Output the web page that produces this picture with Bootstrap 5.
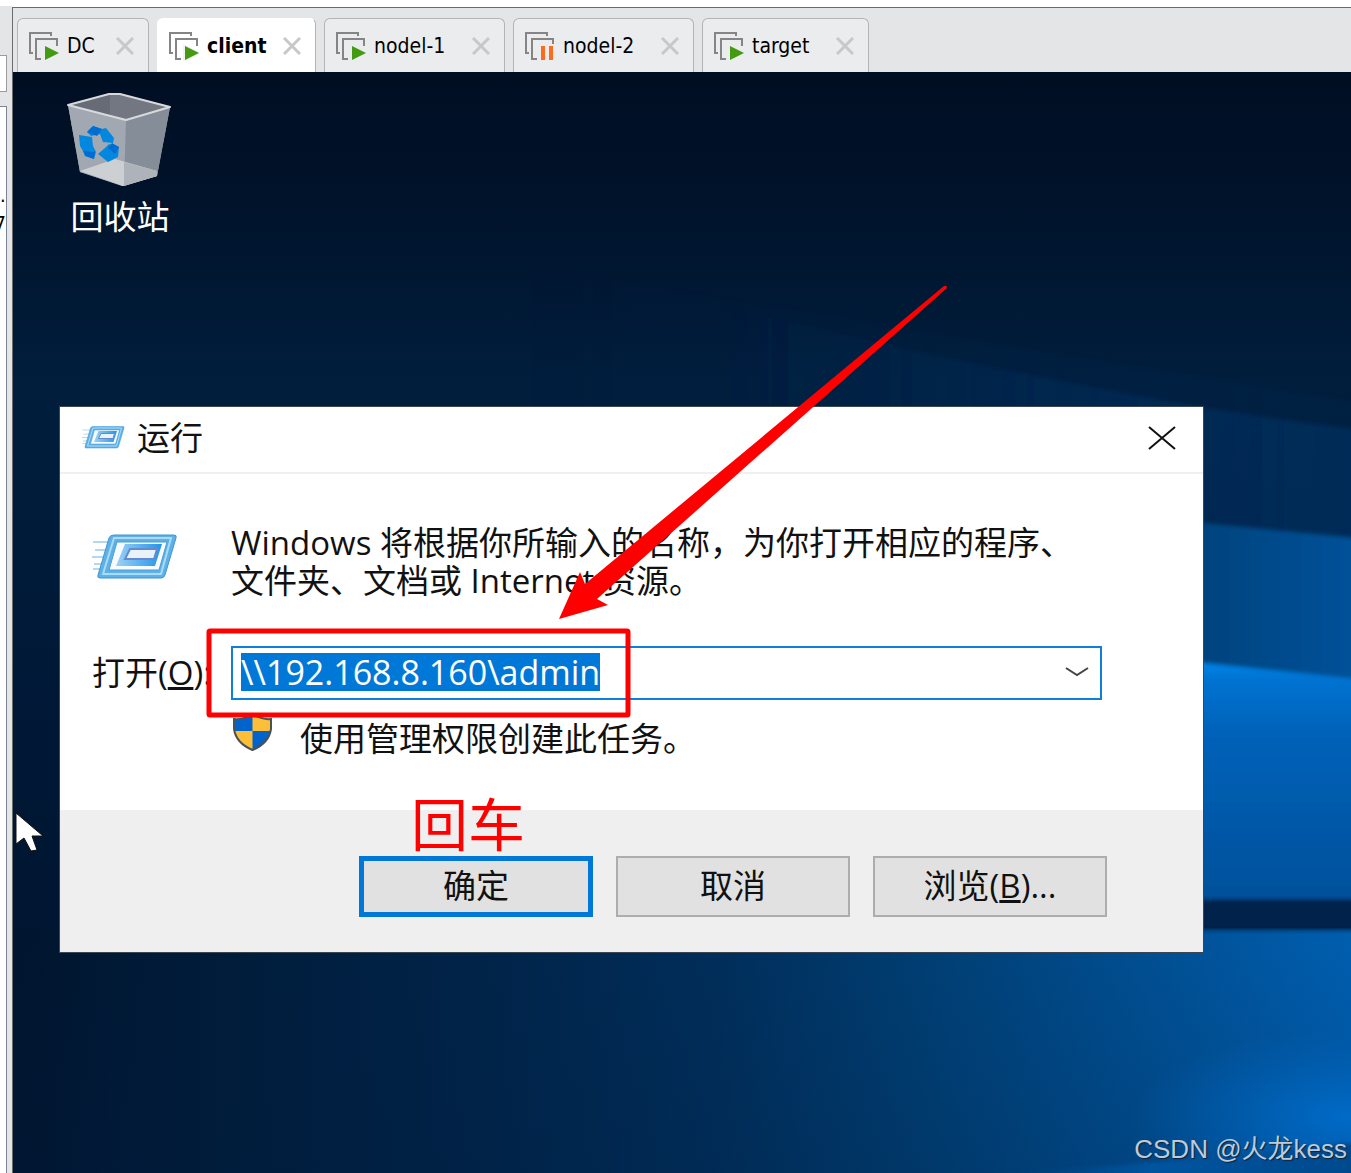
<!DOCTYPE html>
<html lang="zh-CN">
<head>
<meta charset="utf-8">
<meta name="viewport" content="width=device-width, initial-scale=1">
<title>client</title>
<link href="https://cdn.jsdelivr.net/npm/bootstrap@5.3.0/dist/css/bootstrap.min.css" rel="stylesheet">
<style>
  body { font-family: "Open Sans", "Noto Sans CJK SC", sans-serif; font-size: 33px; line-height: 38px; color: #111; background: #fff; padding-top: 6px; }
  .side { width: 12px; background: #e4e5e7; font: 20px/28px "DejaVu Sans Condensed", sans-serif; padding-top: 49px; }
  .side-search { width: 7px; height: 37px; background: #fff; border: 2px solid #9a9b9e; border-width: 1px 1px 1px 0; }
  .side-tree { width: 7px; margin-top: 14px; background: #fff; border: 1px solid #7f8494; border-width: 1px 1px 0 0; padding-top: 74px; color: #000; }
  .main-pane { border: 1px solid #6a6b6d; border-width: 1px 0 0 1px; margin-top: 1px; }
  .tabs { background: #e4e5e7; padding: 10px 4px 0; gap: 8px; font: 21px/28px "DejaVu Sans Condensed", "Noto Sans", sans-serif; }
  .vm-tab { height: 54px; padding: 0 14px 0 11px; background: #ebecee; border: 1px solid #b3b4b6; border-bottom: 0; border-radius: 6px 6px 0 0; color: #000; }
  .vm-tab.current { background: #fff; border-color: #fff #b3b4b6 #fff #fff; font-weight: 700; }
  .vm-tab a { color: #000; text-decoration: none; gap: 8px; }
  .w-a { width: 132px; } .w-b { width: 159px; } .w-c { width: 181px; } .w-d { width: 167px; }
  .plain { background: none; border: 0; padding: 0; line-height: 0; }
  .desktop { background: #00132b; }
  .wallpaper, .notes { inset: 0; width: 100%; height: 100%; }
  .notes { pointer-events: none; }
  .bin { left: 47px; top: 19px; color: #fff; text-decoration: none; width: 120px; }
  .bin svg { margin-bottom: 9px; }
  .run { left: 46px; right: 147px; top: 334px; background: #fff; border: 1px solid #3b4652; }
  .run-head { height: 67px; padding: 0 26px 3px 22px; border-bottom: 2px solid #f0f0f0; gap: 12px; }
  .run-body { padding: 50px 101px 52px 32px; }
  .lead-col { width: 139px; flex: none; white-space: nowrap; }
  .combo { height: 54px; border: 2px solid #0f7fdc; background: #fff; padding: 5px 10px 7px 8px; }
  .combo input { border: 0; outline: 0; padding: 0; height: 38px; font-size: 34px; line-height: 38px; min-width: 0; }
  .combo input::selection { background: #0078d7; color: #fff; }
  .open-row { margin-top: 46px; }
  .admin-row { margin-top: 20px; padding-left: 141px; gap: 28px; }
  .run-foot { background: #efefef; padding: 46px 96px 35px; gap: 23px; }
  .run-btn { width: 234px; height: 61px; background: #e1e1e1; border: 2px solid #adadad; padding: 0 0 2px; color: #111; }
  .run-btn.primary { border: 5px solid #0078d7; }
  .enter-note { left: 398px; top: 722px; font-size: 57px; line-height: 60px; color: #f00; pointer-events: none; }
  .pointer { left: 1px; top: 739px; }
  .watermark { right: 4px; bottom: 5px; font: 26px/38px "Liberation Sans", "Noto Sans CJK SC", sans-serif; color: #bccbdc; text-shadow: 1px 1px 1px #123; }
</style>
</head>
<body class="vh-100 d-flex flex-column overflow-hidden">
<svg width="0" height="0" class="position-absolute">
  <symbol id="vm" viewBox="0 0 30 30"><path d="M4 22H1V2h21v3M12 28H7V8h21v7" fill="none" stroke="#858585" stroke-width="2"/></symbol>
  <symbol id="play" viewBox="0 0 30 30"><use href="#vm"/><path d="M14 13v18l18-9z" fill="#ebecee" opacity=".7"/><path d="M16 15v14l14-7z" fill="#449a10"/></symbol>
  <symbol id="pause" viewBox="0 0 30 30"><use href="#vm"/><path d="M14 13h16v17H14z" fill="#ebecee"/><path d="M16 15h4v14h-4zM24 15h4v14h-4z" fill="#ff6a1c"/></symbol>
  <symbol id="cross" viewBox="0 0 18 18"><path d="M1 1l16 16M17 1L1 17" stroke="#c8c8c8" stroke-width="3"/></symbol>
  <symbol id="runicon" viewBox="0 0 86 54">
    <path d="M1 10h22M3 18h18M0 25h18M2 32h14M1 37h14" stroke="#b5d8f1" stroke-width="2"/>
    <path d="M22 3h60q3 0 2 3L73 43q-1 3-4 3H8q-3 0-2-3L17 6q1-3 5-3z" fill="#5eb0e6" stroke="#3d96d2"/>
    <path d="M22 6h57L69 42H11z" fill="none" stroke="#a9dcf6" stroke-width="2"/>
    <path d="M25 10h50l-8 28H17z" fill="#f7fbfe" stroke="#4b9ed6"/>
    <path d="M33 12h37l-7 22H24z" fill="url(#ri)"/>
    <path d="M38 17h27l-3 10H33z" fill="#e8f3fc" stroke="#6689cf" stroke-width="2"/>
  </symbol>
  <linearGradient id="ri"><stop stop-color="#9bd2f5"/><stop offset="1" stop-color="#2494e6"/></linearGradient>
</svg>
<div class="d-flex flex-grow-1">
  <aside class="side d-flex flex-column flex-shrink-0">
    <div class="side-search"></div>
    <div class="side-tree flex-grow-1 overflow-hidden"><div class="text-nowrap">.8</div><div class="d-flex justify-content-end">7</div></div>
  </aside>
  <main class="main-pane d-flex flex-column flex-grow-1">
    <nav class="tabs d-flex">
      <div class="vm-tab w-a d-flex align-items-center"><a href="#" class="d-flex align-items-center"><svg width="30" height="30"><use href="#play"/></svg>DC</a><button class="plain ms-auto" aria-label="关闭"><svg width="18" height="18"><use href="#cross"/></svg></button></div>
      <div class="vm-tab w-b current d-flex align-items-center"><a href="#" class="d-flex align-items-center"><svg width="30" height="30"><use href="#play"/></svg>client</a><button class="plain ms-auto" aria-label="关闭"><svg width="18" height="18"><use href="#cross"/></svg></button></div>
      <div class="vm-tab w-c d-flex align-items-center"><a href="#" class="d-flex align-items-center"><svg width="30" height="30"><use href="#play"/></svg>nodel-1</a><button class="plain ms-auto" aria-label="关闭"><svg width="18" height="18"><use href="#cross"/></svg></button></div>
      <div class="vm-tab w-c d-flex align-items-center"><a href="#" class="d-flex align-items-center"><svg width="30" height="30"><use href="#pause"/></svg>nodel-2</a><button class="plain ms-auto" aria-label="关闭"><svg width="18" height="18"><use href="#cross"/></svg></button></div>
      <div class="vm-tab w-d d-flex align-items-center"><a href="#" class="d-flex align-items-center"><svg width="30" height="30"><use href="#play"/></svg>target</a><button class="plain ms-auto" aria-label="关闭"><svg width="18" height="18"><use href="#cross"/></svg></button></div>
    </nav>
    <div class="desktop position-relative flex-grow-1 overflow-hidden">
      <svg class="wallpaper position-absolute" viewBox="0 0 1338 1101" preserveAspectRatio="none">
        <defs>
          <linearGradient id="base" x1="0" y1="0" x2="0" y2="1"><stop stop-color="#000e22"/><stop offset=".12" stop-color="#00132b"/><stop offset=".28" stop-color="#001e3d"/><stop offset=".6" stop-color="#001836"/><stop offset="1" stop-color="#00142e"/></linearGradient>
          <linearGradient id="ray"><stop stop-color="#003468" stop-opacity="0"/><stop offset="1" stop-color="#003468" stop-opacity=".6"/></linearGradient>
          <linearGradient id="low"><stop stop-color="#00152f"/><stop offset=".12" stop-color="#001b38"/><stop offset=".35" stop-color="#002449"/><stop offset=".52" stop-color="#002e5a"/><stop offset=".68" stop-color="#003f74"/><stop offset=".84" stop-color="#004f92"/><stop offset="1" stop-color="#005fb0"/></linearGradient>
          <linearGradient id="fade" x1="0" y1="0" x2="0" y2="1"><stop stop-color="#001c40" stop-opacity="0"/><stop offset="1" stop-color="#001c40" stop-opacity=".2"/></linearGradient>
          <linearGradient id="pane" x1="0" y1="0" x2="0" y2="1"><stop stop-color="#0a86ea"/><stop offset=".07" stop-color="#0073d2"/><stop offset=".3" stop-color="#0062b8"/><stop offset="1" stop-color="#00509a"/></linearGradient>
          <linearGradient id="mid" x1="0" y1="0" x2="1" y2="0"><stop stop-color="#00427c"/><stop offset="1" stop-color="#00529a"/></linearGradient>
          <radialGradient id="glow"><stop stop-color="#006bc8"/><stop offset="1" stop-color="#0062b8" stop-opacity="0"/></radialGradient>
          <linearGradient id="edge"><stop stop-color="#003a70" stop-opacity="0"/><stop offset=".5" stop-color="#00549f"/><stop offset="1" stop-color="#004a8c"/></linearGradient>
          <filter id="soft"><feGaussianBlur stdDeviation="2"/></filter>
        </defs>
        <rect width="1338" height="1101" fill="url(#base)"/>
        <path d="M500 190Q900 260 1345 330V640H500z" fill="url(#ray)" opacity=".25" filter="url(#soft)"/>
        <path d="M700 230Q1050 320 1345 358V640H700z" fill="url(#ray)" filter="url(#soft)"/>
        <path d="M0 856H1338V1101H0z" fill="url(#low)"/>
        <path d="M0 856H1338V1101H0z" fill="url(#fade)"/>
        <ellipse cx="1338" cy="1045" rx="220" ry="90" fill="url(#glow)"/>
        <path d="M930 1106Q1180 1090 1345 1070V1110H930z" fill="url(#edge)" filter="url(#soft)"/>
        <g filter="url(#soft)">
          <path d="M1180 450L1345 466V620H1180z" fill="url(#mid)"/>
          <path d="M1180 590L1345 607V830H1180z" fill="url(#pane)"/>
          <path d="M1180 827H1345V858H1180z" fill="#00234c"/>
        </g>
      </svg>

      <a href="#" class="bin position-absolute text-center">
        <svg class="d-block mx-auto" width="106" height="98" viewBox="0 0 106 98">
          <path d="M1 14L45 3l58 13-13 69-35 10L13 81z" fill="#9ca3ad"/>
          <path d="M1 14L42 3h11l50 13-44 13z" fill="#666b76"/><path d="M43 3h10l50 13-44 13-16-4z" fill="#727782"/>
          <path d="M1 14l58 15-2 66-44-14z" fill="#a2a8b2"/><path d="M59 29l44-13-13 69-33 10z" fill="#858e98"/>
          <path d="M13 80l35-12 42 12v5l-34 10z" fill="#cdd0d3"/><path d="M57 71l33 9v5l-33 10z" fill="#adb3b8"/>
          <path d="M1 14L42 3h11l50 13-44 13z" fill="none" stroke="#d8d9dc" stroke-width="2" stroke-linejoin="round"/>
          <g fill="#0487df"><path d="M20 41l6-6 9 3 4-1 8 10-1 5-10-1-3-8-9 2z"/><path d="M12 44l13 2 1 9 3 6-2 7-8-3-6-10z"/><path d="M31 63l7-6 4-4 10 3-1 10-10 5z"/></g>
          <path d="M20 41l6-6 9 3-5 7zM16 60l12 1-1 7-9-3zM41 57l4-5 7 4-4 7z" fill="#006dd2"/>
        </svg>
        回收站
      </a>

      <section class="run position-absolute" role="dialog" aria-label="运行">
        <header class="run-head d-flex align-items-center">
          <svg width="43" height="27" viewBox="0 0 86 54"><use href="#runicon"/></svg>
          <span>运行</span>
          <button class="plain ms-auto" aria-label="关闭"><svg width="30" height="24" viewBox="0 0 30 24"><path d="M2 1l26 22M28 1L2 23" stroke="#111" stroke-width="2"/></svg></button>
        </header>
        <div class="run-body">
          <div class="d-flex">
            <div class="lead-col"><svg class="mt-2" width="86" height="54"><use href="#runicon"/></svg></div>
            <div>Windows 将根据你所输入的名称，为你打开相应的程序、<br>文件夹、文档或 Internet 资源。</div>
          </div>
          <div class="open-row d-flex align-items-center">
            <label class="lead-col" for="path">打开(<u>O</u>):</label>
            <div class="combo d-flex align-items-center flex-grow-1">
              <input id="path" class="flex-grow-1" type="text" value="\\192.168.8.160\admin" spellcheck="false" autocomplete="off">
              <button class="plain" aria-label="展开"><svg width="26" height="14" viewBox="0 0 26 14"><path d="M2 3l11 7 11-7" fill="none" stroke="#444" stroke-width="2"/></svg></button>
            </div>
          </div>
          <div class="admin-row d-flex align-items-center">
            <svg width="39" height="38" viewBox="0 0 39 38" class="overflow-visible flex-shrink-0">
              <path d="M19.500-6Q10 0 1-1V9Q3 23 19.500 30 36 23 38 9V-1Q29 0 19.500-6z" fill="#ffbe37"/>
              <path d="M19.500-6Q10 0 1-1V11h18.500zM19.500 11H38Q35 23 19.500 30z" fill="#0064cc"/>
              <path d="M19.500-6Q10 0 1-1V9Q3 23 19.500 30 36 23 38 9V-1Q29 0 19.500-6z" fill="none" stroke="#4a5259" stroke-width="2"/>
            </svg>
            <span>使用管理权限创建此任务。</span>
          </div>
        </div>
        <footer class="run-foot d-flex justify-content-end">
          <button class="run-btn primary">确定</button>
          <button class="run-btn">取消</button>
          <button class="run-btn">浏览(<u>B</u>)...</button>
        </footer>
      </section>

      <svg class="notes position-absolute" fill="#f00">
        <rect x="196" y="559" width="419" height="84" rx="1" fill="none" stroke="#f00" stroke-width="5"/>
        <path d="M546 547l21-47 5 12L931 214q3-1 3 2L584 527l11 6z"/>
      </svg>
      <div class="enter-note position-absolute">回车</div>
      <svg class="pointer position-absolute" width="32" height="42" viewBox="0 0 32 42"><path d="M2 2v31l8-6 7 13 6-1-5-14h11z" fill="#fff" stroke="#111" stroke-width="1"/></svg>
      <div class="watermark position-absolute">CSDN @火龙kess</div>
    </div>
  </main>
</div>
<script src="https://cdn.jsdelivr.net/npm/bootstrap@5.3.0/dist/js/bootstrap.bundle.min.js"></script>
<script>
  document.getElementById('path').focus();
  document.getElementById('path').select();
</script>
</body>
</html>
